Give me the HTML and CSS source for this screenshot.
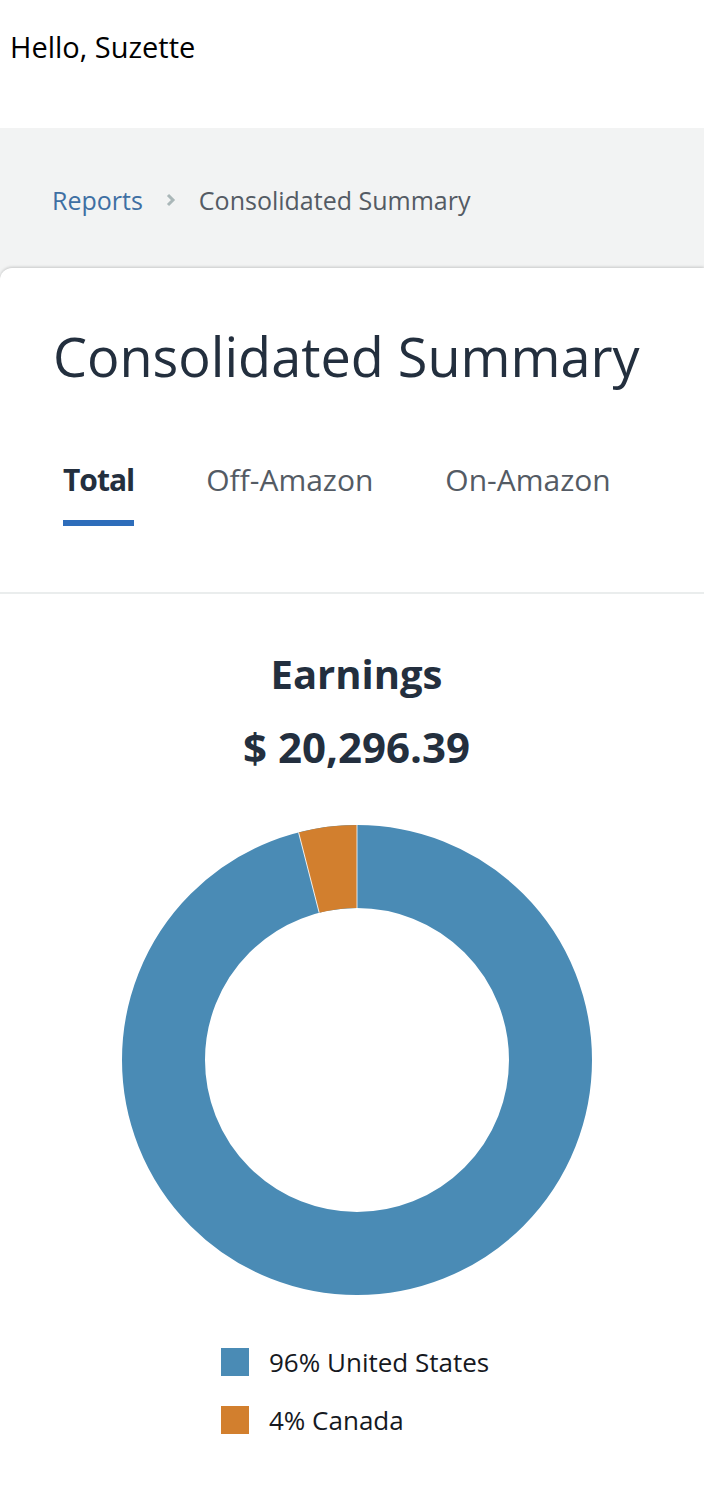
FILE: index.html
```html
<!DOCTYPE html>
<html lang="en">
<head>
<meta charset="UTF-8">
<meta name="viewport" content="width=device-width, initial-scale=1">
<title>Consolidated Summary</title>
<link rel="stylesheet" href="styles.css">
</head>
<body>
<div class="top">Hello, Suzette</div>

<div class="page">
  <div class="crumbs">
    <a class="crumb-link" href="#">Reports</a>
    <svg class="crumb-sep" width="12" height="16" viewBox="0 0 12 16"><path d="M3 3l5 5-5 5" fill="none" stroke="#aab7b8" stroke-width="3"/></svg>
    <span class="crumb-cur">Consolidated Summary</span>
  </div>

  <div class="card">
    <h1 class="title">Consolidated Summary</h1>
    <div class="tabs">
      <div class="tab active">Total</div>
      <div class="tab">Off-Amazon</div>
      <div class="tab">On-Amazon</div>
    </div>

    <div class="chart">
      <div class="chart-label">Earnings</div>
      <div class="chart-total">$ 20,296.39</div>
      <svg class="donut" width="470" height="470" viewBox="0 0 470 470">
        <circle cx="235" cy="235" r="193.5" fill="none" stroke="#4a8bb5" stroke-width="83"/>
        <circle cx="235" cy="235" r="193.5" fill="none" stroke="#d27f2e" stroke-width="83"
                stroke-dasharray="48.6 1300" transform="rotate(-104.4 235 235)"/>
        <line x1="235" y1="0" x2="235" y2="83" stroke="#fff" stroke-width="0.8"/>
        <line x1="235" y1="0" x2="235" y2="83" stroke="#fff" stroke-width="0.8" transform="rotate(-14.4 235 235)"/>
      </svg>
      <div class="legend">
        <div class="legend-row"><span class="swatch us"></span>96% United States</div>
        <div class="legend-row"><span class="swatch ca"></span>4% Canada</div>
      </div>
    </div>
  </div>
</div>
</body>
</html>
```

FILE: styles.css
```css
* { padding: 0; margin: 0; box-sizing: border-box; }
body {
  font-family: "Open Sans", "Noto Sans", sans-serif;
  color: #16191f;
  background: #fff;
}
.top {
  height: 128px;
  padding: 29px 10px 0;
  font-size: 29px;
  line-height: 36px;
  color: #000;
}
.page {
  background: #f2f3f3;
}
.crumbs {
  height: 140px;
  display: flex;
  align-items: center;
  padding: 4px 52px 0;
  font-size: 25px;
}
.crumb-link {
  color: #3e6fa3;
  text-decoration: none;
}
.crumb-sep {
  margin: 0 22px 0 22px;
}
.crumb-cur {
  color: #545b64;
}
.card {
  background: #fff;
  border-radius: 12px 0 0 0;
  box-shadow: 0 -1px 3px rgba(0,0,0,0.18);
}
.title {
  padding: 53px 53px 0;
  font-size: 54px;
  font-weight: 400;
  line-height: 70px;
  color: #232f3e;
}
.tabs {
  display: flex;
  align-items: flex-start;
  padding: 69px 0 66px 63px;
  gap: 72px;
  border-bottom: 2px solid #eaeded;
}
.tab {
  font-size: 30px;
  line-height: 40px;
  color: #545b64;
  padding-bottom: 26px;
}
.tab.active {
  font-weight: 700;
  letter-spacing: -1px;
  color: #232f3e;
  padding-bottom: 20px;
  border-bottom: 6px solid #2e6dba;
  border-radius: 4px 4px 0 0;
}
.chart {
  display: flex;
  flex-direction: column;
  align-items: center;
  padding: 55px 0 80px 9px;
}
.chart-label, .chart-total {
  font-weight: 700;
  color: #232f3e;
  line-height: 50px;
}
.chart-label {
  font-size: 40px;
}
.chart-total {
  font-size: 42px;
  margin-top: 23px;
}
.donut {
  margin: 53px 0 0 1px;
  display: block;
}
.legend {
  margin-top: 53px;
  display: flex;
  flex-direction: column;
  gap: 30px;
  align-self: flex-start;
  margin-left: 212px;
}
.legend-row {
  display: flex;
  align-items: center;
  gap: 20px;
  font-size: 26px;
  color: #16191f;
  line-height: 28px;
}
.swatch {
  width: 28px;
  height: 28px;
}
.swatch.us { background: #4a8bb5; }
.swatch.ca { background: #d27f2e; }
```
